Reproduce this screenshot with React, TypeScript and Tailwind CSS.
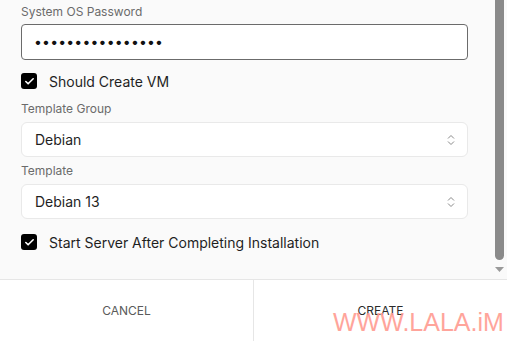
import { Check } from "lucide-react";

function Label({ text }: { text: string }) {
  return <div className="text-[12px] leading-4 text-[#6b6b6b]">{text}</div>;
}

function SelectBox({ value }: { value: string }) {
  return (
    <div className="flex h-[35px] items-center justify-between rounded-md border border-[#e9e9e9] bg-white pl-[13px] pr-[12px]">
      <span className="text-[14px] text-[#1f1f1f]">{value}</span>
      <svg width="8" height="12" viewBox="0 0 8 12" fill="none" stroke="#8a8a8a" strokeWidth="1">
        <path d="M1 4.5 L4 1.5 L7 4.5" />
        <path d="M1 7.5 L4 10.5 L7 7.5" />
      </svg>
    </div>
  );
}

function CheckRow({ text }: { text: string }) {
  return (
    <div className="flex h-4 items-center gap-3">
      <div className="flex h-4 w-4 items-center justify-center rounded-[3px] bg-black">
        <Check className="h-[11px] w-[11px] text-white" strokeWidth={3.5} />
      </div>
      <span className="text-[14px] text-[#1f1f1f]">{text}</span>
    </div>
  );
}

export default function App() {
  return (
    <div
      className="relative flex h-[341px] w-[507px] flex-col overflow-hidden bg-white"
      style={{ fontFamily: "Inter, 'Liberation Sans', sans-serif" }}
    >
      <div className="flex h-[279px] bg-[#fafafa]">
        <div className="flex-1 pl-[21px] pr-[25px] pt-1">
          <Label text="System OS Password" />
          <div className="mt-1 flex h-9 items-center rounded border border-[#6b6b6b] bg-white pl-[12px]">
            <span className="text-[14px] leading-none tracking-[0.2px] text-[#111]">
              ••••••••••••••••
            </span>
          </div>
          <div className="mt-[13px]">
            <CheckRow text="Should Create VM" />
          </div>
          <div className="mt-3">
            <Label text="Template Group" />
          </div>
          <div className="mt-[5px]">
            <SelectBox value="Debian" />
          </div>
          <div className="mt-[6px]">
            <Label text="Template" />
          </div>
          <div className="mt-[5px]">
            <SelectBox value="Debian 13" />
          </div>
          <div className="mt-[15px]">
            <CheckRow text="Start Server After Completing Installation" />
          </div>
        </div>
        <div className="flex w-[14px] flex-col items-start pl-[2px]">
          <div className="h-[260px] w-[9px] rounded-b-full bg-[#8a8a8a]" />
          <svg width="9" height="5" viewBox="0 0 9 5" className="mt-[7px]">
            <path d="M0 0 L9 0 L4.5 5 Z" fill="#9a9a9a" />
          </svg>
        </div>
      </div>
      <div className="flex flex-1 border-t border-[#e6e6e6]">
        <div className="flex flex-1 items-center justify-center border-r border-[#e6e6e6] pt-[1px] text-[12px] text-[#5a5a5a]">
          CANCEL
        </div>
        <div className="flex flex-1 items-center justify-center pt-[1px] text-[12px] text-[#2a2a2a]">
          CREATE
        </div>
      </div>
      <div
        className="absolute left-[333px] top-[310px] text-[25px] leading-none text-[#ff9a90]/90"
        style={{ fontFamily: "'Liberation Sans', sans-serif" }}
      >
        WWW.LALA.iM
      </div>
    </div>
  );
}
